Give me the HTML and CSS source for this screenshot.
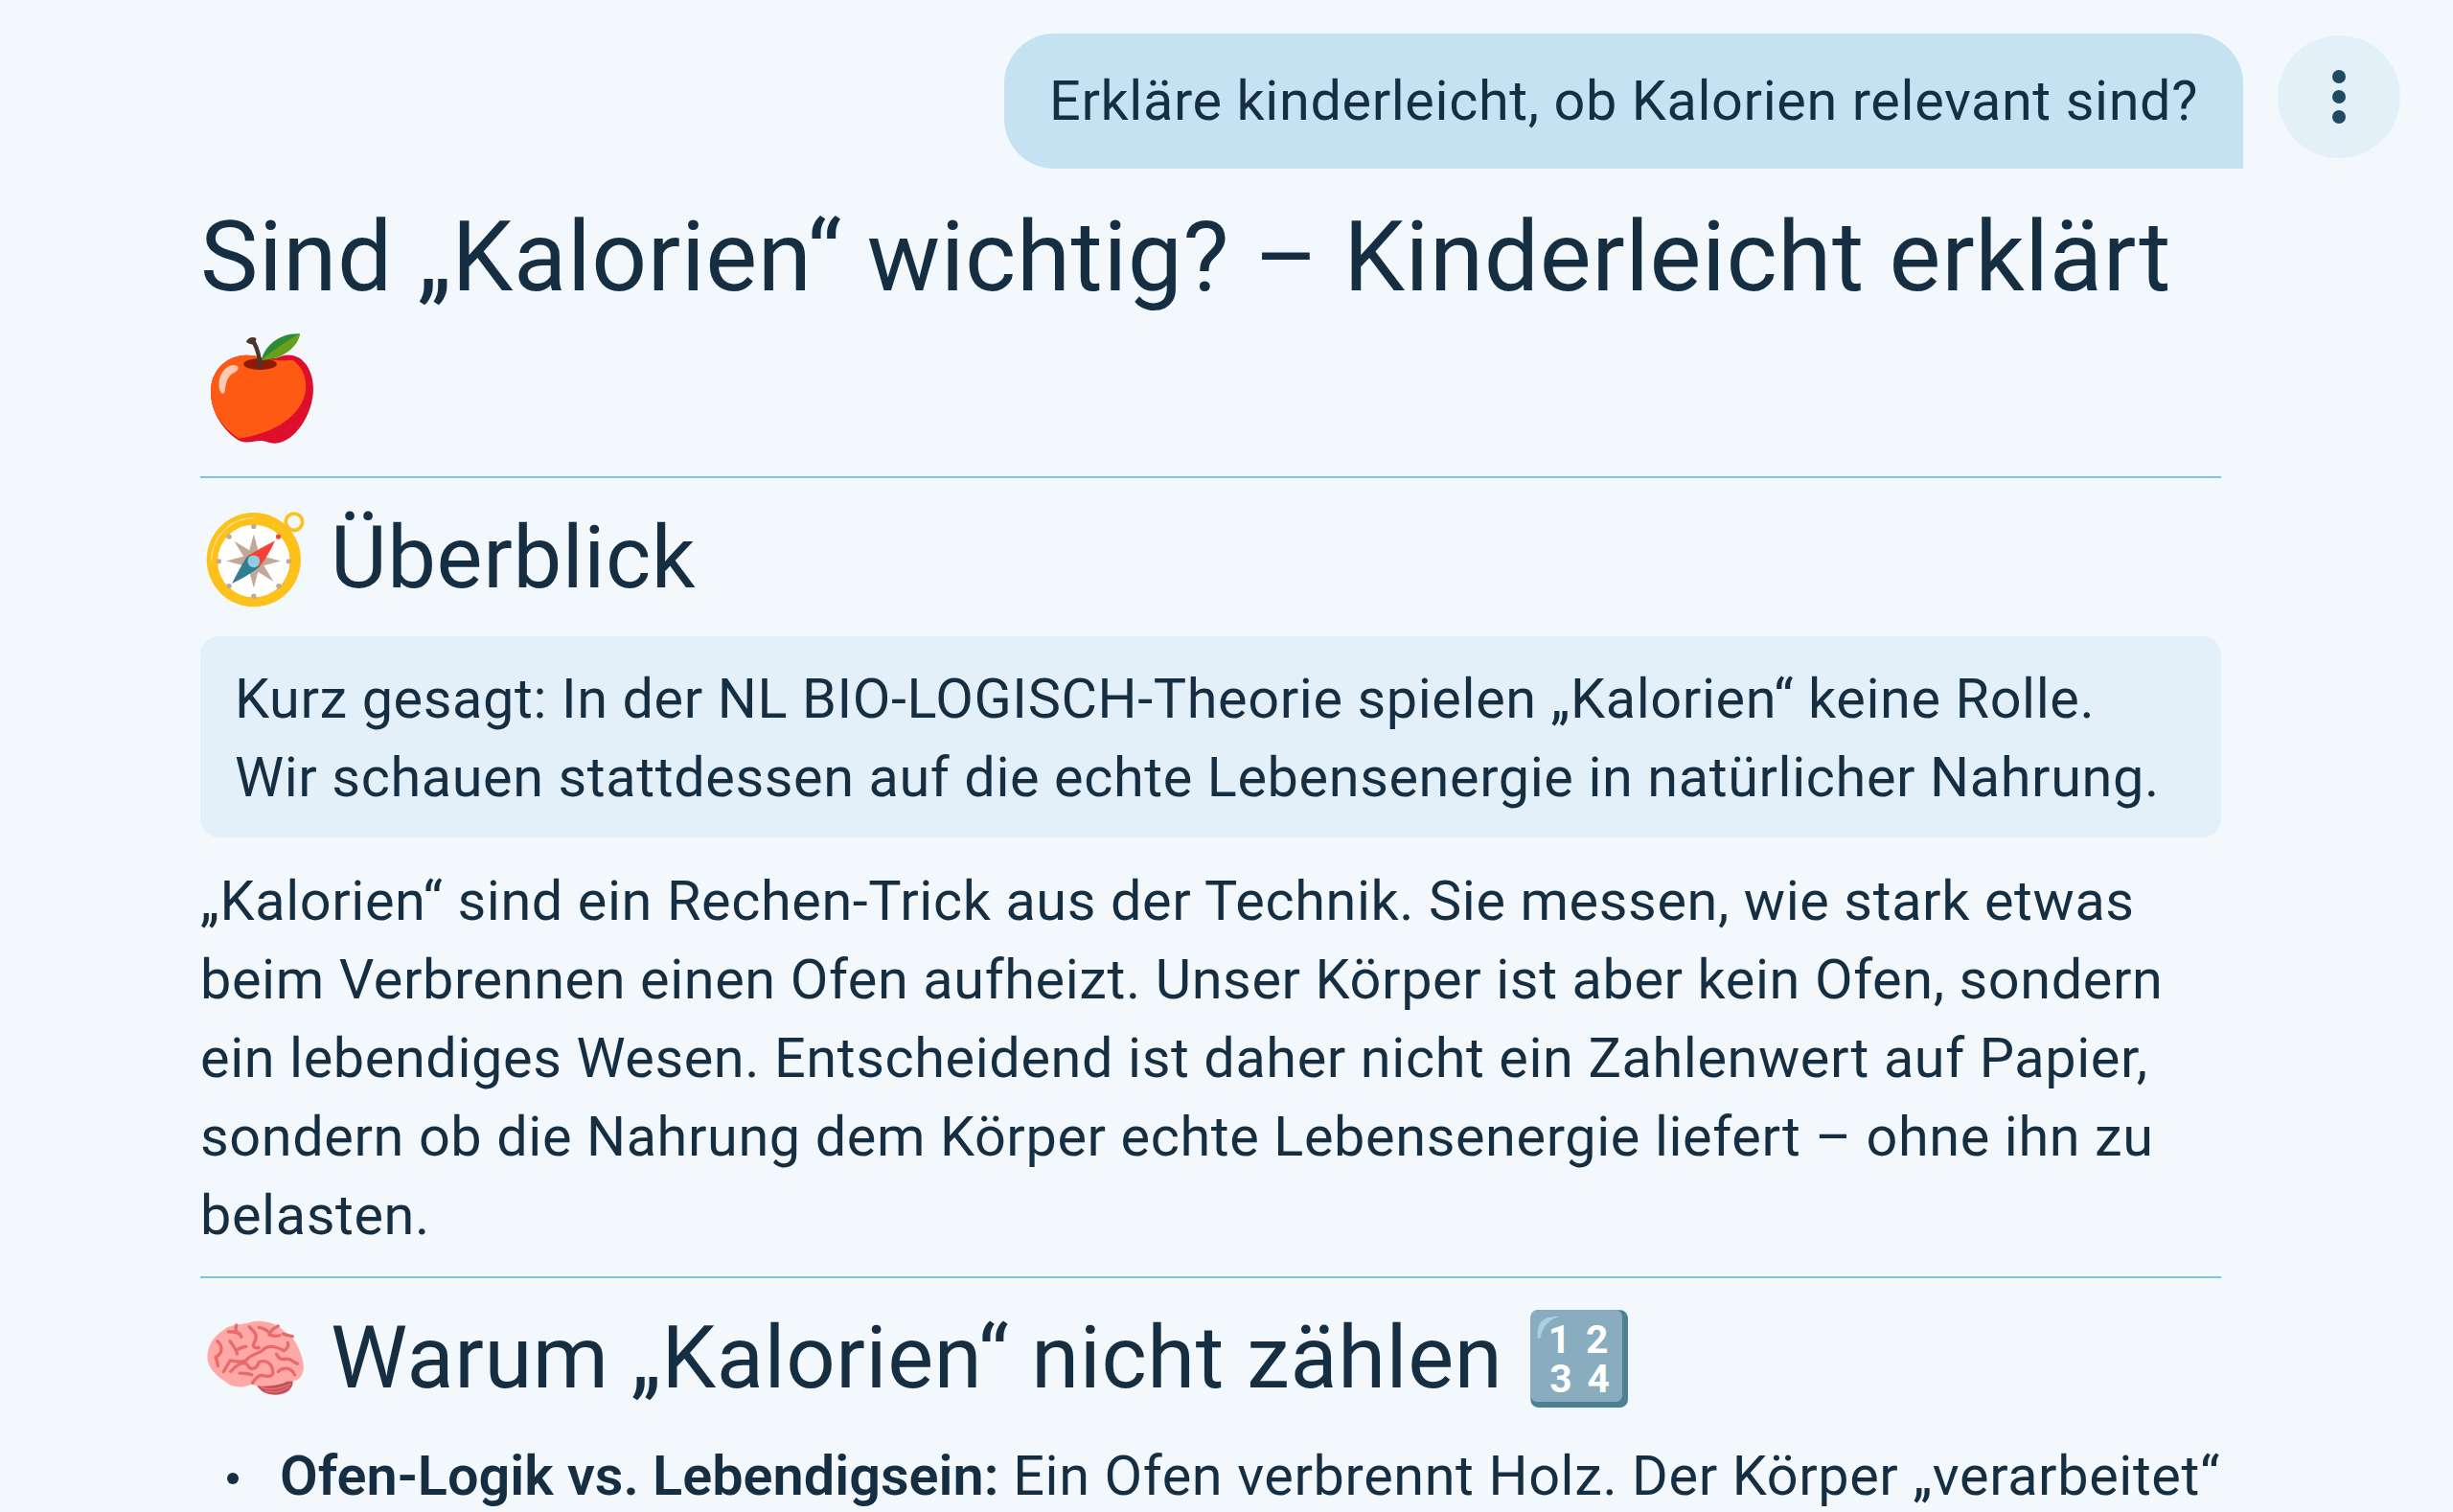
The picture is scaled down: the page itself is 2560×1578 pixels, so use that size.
FILE: index.html
```html
<!DOCTYPE html>
<html lang="de">

<head>
    <title>Kalorien</title>
    <link rel="stylesheet" href="styles.css">
</head>

<body>
    <div class="user-row">
        <div class="user-bubble">Erkläre kinderleicht, ob Kalorien relevant sind?</div>
        <button class="more-button" aria-label="Mehr">
            <svg viewBox="0 0 14 56" width="14" height="56">
                <circle cx="7" cy="7" r="7" />
                <circle cx="7" cy="28" r="7" />
                <circle cx="7" cy="49" r="7" />
            </svg>
        </button>
    </div>

    <div class="answer">
        <h1>Sind „Kalorien“ wichtig? – Kinderleicht erklärt
            <svg class="emoji emoji-apple" viewBox="57 60 380 380">
                <path d="M175 420C125 385 90 330 90 270C90 200 140 155 205 155C240 155 275 175 310 158C370 140 410 195 410 260C410 340 350 430 290 430C270 430 260 422 245 422C225 422 200 434 175 420Z" fill="#dd0f2c" />
                <path d="M178 415C125 380 90 330 90 270C90 200 140 155 205 155C240 155 275 178 345 170C375 190 392 225 385 270C370 350 280 400 178 415Z" fill="#ff5a14" />
                <ellipse cx="244" cy="183" rx="52" ry="18" fill="#8c1c06" />
                <path d="M244 190C242 160 238 140 226 118" stroke="#4e342e" stroke-width="13" fill="none" stroke-linecap="round" />
                <path d="M200 113C208 98 222 96 232 102L228 124C218 120 206 120 200 113Z" fill="#4e342e" />
                <path d="M248 170C258 125 305 85 368 88C362 130 310 170 248 170Z" fill="#2e8b35" />
                <path d="M248 170C290 135 330 110 368 88C362 130 310 170 248 170Z" fill="#6a9f1b" />
                <path d="M118 265C108 225 130 190 160 186C180 186 180 202 165 208C145 216 135 240 134 268C130 278 122 276 118 265Z" fill="#ffc9b3" />
            </svg>
        </h1>

        <hr class="rule">

        <h2>
            <svg class="emoji emoji-lead" viewBox="57 40 380 380">
                <circle cx="350" cy="96" r="26" fill="none" stroke="#fcc21b" stroke-width="11" />
                <circle cx="224" cy="214" r="147" fill="#fcc21b" />
                <path d="M92 214A132 132 0 0 1 224 84A132 132 0 0 0 92 214Z" fill="#ffe082" stroke="#ffe082" stroke-width="4" />
                <circle cx="224" cy="218" r="113" fill="#fff" />
                <g fill="#c3a797">
                    <path d="M224 134L242 200L308 218L242 236L224 302L206 236L138 218L206 200Z" />
                    <path d="M163 156L236 200L286 282L212 236Z" />
                    <circle cx="224" cy="110" r="8" />
                    <circle cx="224" cy="328" r="8" />
                    <circle cx="115" cy="219" r="8" />
                    <circle cx="333" cy="219" r="8" />
                    <circle cx="147" cy="142" r="8" />
                    <circle cx="302" cy="296" r="8" />
                    <circle cx="147" cy="296" r="8" />
                </g>
                <circle cx="301" cy="142" r="8" fill="#f44336" />
                <path d="M290 155C275 190 258 215 242 236L204 202C235 185 262 168 290 155Z" fill="#f44336" />
                <path d="M156 288C170 262 186 230 204 202L242 236C215 258 185 275 156 288Z" fill="#2f7f93" />
                <circle cx="224" cy="219" r="19" fill="#8ccfe4" />
            </svg>
            Überblick
        </h2>

        <blockquote class="summary">Kurz gesagt: In der NL BIO-LOGISCH-Theorie spielen „Kalorien“ keine Rolle.<br>
            Wir schauen stattdessen auf die echte Lebensenergie in natürlicher Nahrung.</blockquote>

        <p class="text">„Kalorien“ sind ein Rechen-Trick aus der Technik. Sie messen, wie stark etwas beim Verbrennen einen Ofen aufheizt. Unser Körper ist aber kein Ofen, sondern ein lebendiges Wesen. Entscheidend ist daher nicht ein Zahlenwert auf Papier, sondern ob die Nahrung dem Körper echte Lebensenergie liefert – ohne ihn zu belasten.</p>

        <hr class="rule">

        <h2>
            <svg class="emoji emoji-lead" viewBox="57 46 380 380">
                <path d="M232 300C250 335 300 340 330 322C345 308 348 298 345 285Z" fill="#c2505a" />
                <g stroke="#e57373" stroke-width="4" fill="none">
                    <path d="M245 308C275 320 310 313 340 298M260 320C285 328 315 320 335 308" />
                </g>
                <path d="M150 302C120 280 90 265 80 225C75 190 95 150 130 130C150 110 190 115 215 105C250 95 300 110 320 135C350 150 370 190 378 230C385 265 370 295 330 290C300 305 255 310 215 300C195 310 170 310 150 302Z" fill="#ffa8a8" />
                <g stroke="#e86a6a" stroke-width="10" fill="none" stroke-linecap="round" stroke-linejoin="round">
                    <path d="M110 165C130 180 125 205 105 215C108 225 112 232 112 242" />
                    <path d="M145 135C165 135 185 140 185 152M170 115C165 125 168 132 172 138" />
                    <path d="M150 165C160 180 170 190 172 205M172 192C182 186 192 182 200 182" />
                    <path d="M210 120C225 135 240 145 225 170C220 180 225 190 240 185" />
                    <path d="M240 122C255 125 270 130 275 145M300 118C285 125 275 135 272 145M275 145C285 150 295 150 305 147" />
                    <path d="M316 142C325 145 335 147 345 150M330 170C335 180 325 190 318 195C300 185 270 170 250 195C235 205 215 205 200 225C180 235 160 225 150 225L130 260" />
                    <path d="M152 260C160 250 190 220 205 240C215 260 235 250 240 230C255 225 270 225 280 245C285 260 290 275 265 275C250 270 240 265 220 295M180 265C195 265 205 265 218 270" />
                    <path d="M295 205C300 215 310 225 325 220C345 220 345 230 360 235M300 260C315 245 340 245 352 270" />
                </g>
            </svg>
            Warum „Kalorien“ nicht zählen
            <svg class="emoji emoji-end" viewBox="57 50 380 380">
                <rect x="88" y="72" width="304" height="304" rx="24" fill="#4c8092" />
                <rect x="88" y="72" width="286" height="286" rx="20" fill="#89adbf" />
                <path d="M110 160C108 115 120 90 178 92C150 100 128 115 118 160Z" fill="#a8d1e0" />
                <text class="keycap" x="178" y="207" text-anchor="middle">1</text>
                <text class="keycap" x="296" y="207" text-anchor="middle">2</text>
                <text class="keycap" x="183" y="327" text-anchor="middle">3</text>
                <text class="keycap" x="300" y="327" text-anchor="middle">4</text>
            </svg>
        </h2>

        <ul class="points">
            <li><strong>Ofen-Logik vs. Lebendigsein:</strong> Ein Ofen verbrennt Holz. Der Körper „verarbeitet“</li>
        </ul>
    </div>
</body>

</html>
```

FILE: styles.css
```css
html {
    height: 100%;
    overflow: hidden;
}

body {
    margin: 0;
    height: 1578px;
    overflow: hidden;
    background-color: #f3f8fd;
    color: #152e42;
    font-family: Roboto, "Liberation Sans", sans-serif;
    font-size: 57.6px;
    letter-spacing: 0.61px;
    line-height: 82px;
}

.user-row {
    display: flex;
    justify-content: flex-end;
    align-items: flex-start;
    gap: 36px;
    padding: 35px 55px 0 0;
}

.user-bubble {
    box-sizing: border-box;
    height: 141px;
    padding: 30px 47px 0;
    background-color: #c5e2f2;
    border-radius: 52px 52px 0 52px;
}

.more-button {
    display: flex;
    align-items: center;
    justify-content: center;
    width: 128px;
    height: 128px;
    margin-top: 2px;
    padding: 0;
    border: 0;
    border-radius: 50%;
    background-color: #e4f0f8;
}

.more-button svg {
    fill: #1f4a62;
}

.answer {
    width: 2109px;
    margin-left: 209px;
}

h1 {
    margin: 0;
    padding: 30px 0 31px;
    font-size: 101.7px;
    font-weight: 400;
    line-height: 126px;
}

.emoji {
    width: 127px;
    height: 127px;
    vertical-align: middle;
}

.emoji-lead {
    margin-right: -14px;
}

.emoji-end {
    margin-left: -4px;
}

.emoji-apple {
    display: block;
    margin-top: 7px;
}

.rule {
    height: 2px;
    margin: 0;
    border: 0;
    background-color: #80c3dd;
}

h2 {
    margin: 0;
    padding: 20px 0 11px;
    font-size: 90.4px;
    font-weight: 400;
    line-height: 126px;
}

.keycap {
    fill: #fff;
    font-size: 122px;
    font-weight: 700;
}

.summary {
    margin: 0;
    padding: 25px 36px 21px;
    background-color: #e3f0f9;
    border-radius: 20px;
}

.text {
    margin: 26px 0 22px;
}

.points {
    margin: 2px 0 0;
    padding-left: 83px;
    list-style: none;
}

.points li::before {
    content: "";
    display: inline-block;
    width: 12px;
    height: 12px;
    margin: 0 43px 0 -55px;
    border-radius: 50%;
    background-color: #152e42;
    vertical-align: 11px;
}

.points strong {
    font-weight: 600;
    letter-spacing: 0;
}
```
